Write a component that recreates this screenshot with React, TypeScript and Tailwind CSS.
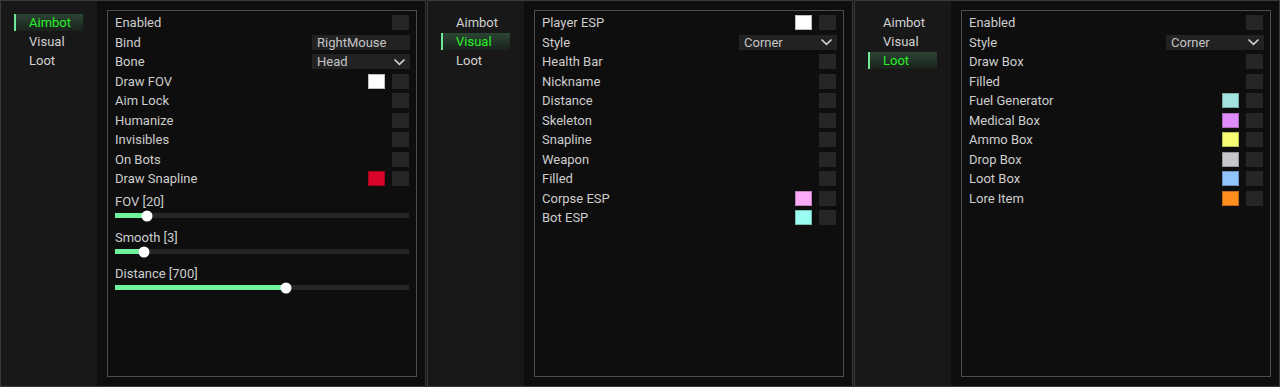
type Row = {
  label: string;
  kind?: "check" | "input" | "combo";
  value?: string;
  color?: string;
};

type Slider = { label: string; pct: number };

const tabs = ["Aimbot", "Visual", "Loot"];

const aimbotRows: Row[] = [
  { label: "Enabled" },
  { label: "Bind", kind: "input", value: "RightMouse" },
  { label: "Bone", kind: "combo", value: "Head" },
  { label: "Draw FOV", color: "#ffffff" },
  { label: "Aim Lock" },
  { label: "Humanize" },
  { label: "Invisibles" },
  { label: "On Bots" },
  { label: "Draw Snapline", color: "#d90429" },
];

const aimbotSliders: Slider[] = [
  { label: "FOV [20]", pct: 10.9 },
  { label: "Smooth [3]", pct: 9.8 },
  { label: "Distance [700]", pct: 58.3 },
];

const visualRows: Row[] = [
  { label: "Player ESP", color: "#ffffff" },
  { label: "Style", kind: "combo", value: "Corner" },
  { label: "Health Bar" },
  { label: "Nickname" },
  { label: "Distance" },
  { label: "Skeleton" },
  { label: "Snapline" },
  { label: "Weapon" },
  { label: "Filled" },
  { label: "Corpse ESP", color: "#fdaaf8" },
  { label: "Bot ESP", color: "#9bfdf1" },
];

const lootRows: Row[] = [
  { label: "Enabled" },
  { label: "Style", kind: "combo", value: "Corner" },
  { label: "Draw Box" },
  { label: "Filled" },
  { label: "Fuel Generator", color: "#a2e3df" },
  { label: "Medical Box", color: "#df8cfb" },
  { label: "Ammo Box", color: "#f6fd73" },
  { label: "Drop Box", color: "#c8c6cb" },
  { label: "Loot Box", color: "#92c3fd" },
  { label: "Lore Item", color: "#fd8d1d" },
];

function Chevron() {
  return (
    <svg width="13" height="8" viewBox="0 0 13 8" className="mr-[4px]">
      <path d="M1.5 1.5 L6.5 6.3 L11.5 1.5" fill="none" stroke="#d0d0d0" strokeWidth="1.7" />
    </svg>
  );
}

function Checkbox() {
  return <div className="w-[17px] h-[15px] bg-[#262626]" />;
}

function OptionRow({ row }: { row: Row }) {
  return (
    <div className="flex h-[19.5px] items-center justify-between">
      <span>{row.label}</span>
      {row.kind === "input" && (
        <div className="w-[98px] h-[15px] bg-[#222222] pl-[5px] leading-[15px] text-[#c4c4c4] mr-[-1px]">
          {row.value}
        </div>
      )}
      {row.kind === "combo" && (
        <div className="w-[98px] h-[15px] bg-[#222222] pl-[5px] leading-[15px] text-[#c4c4c4] flex items-center justify-between mr-[-1px]">
          <span>{row.value}</span>
          <Chevron />
        </div>
      )}
      {!row.kind || row.kind === "check" ? (
        <div className="flex items-center gap-[7px]">
          {row.color && (
            <div
              className="w-[17px] h-[15px] border border-black/25"
              style={{ backgroundColor: row.color }}
            />
          )}
          <Checkbox />
        </div>
      ) : null}
    </div>
  );
}

function SliderBlock({ s }: { s: Slider }) {
  return (
    <div className="mb-[8px]">
      <div className="h-[16px] leading-[16px]">{s.label}</div>
      <div className="h-[12px] flex items-center">
        <div className="relative w-full h-[5px] bg-[#262626]">
          <div className="absolute left-0 top-0 h-full bg-[#6ef29b]" style={{ width: `${s.pct}%` }} />
          <div
            className="absolute top-1/2 w-[11px] h-[11px] rounded-full bg-white -translate-x-1/2 -translate-y-1/2"
            style={{ left: `${s.pct}%` }}
          />
        </div>
      </div>
    </div>
  );
}

function Panel({ active, rows, sliders }: { active: number; rows: Row[]; sliders?: Slider[] }) {
  return (
    <div className="flex w-[426px] h-[387px] border border-[#3a3a3a] shrink-0">
      <div className="w-[96px] bg-[#181818] pt-[13px] pl-[13px]">
        {tabs.map((t, i) =>
          i === active ? (
            <div
              key={t}
              className="w-[69px] h-[17px] mb-[2px] border-l-2 border-[#6ee896] bg-gradient-to-b from-[#2b4534] to-[#1a221c] pl-[13px] leading-[18px] text-[#27f027]"
            >
              {t}
            </div>
          ) : (
            <div key={t} className="w-[69px] h-[17px] mb-[2px] pl-[15px] leading-[18px] text-[#d2d2d2]">
              {t}
            </div>
          )
        )}
      </div>
      <div className="flex-1 bg-[#0e0e0e] pt-[9px] pl-[10px] pr-[8px] pb-[9px]">
        <div className="h-full border border-[#4e4e4e] px-[7px] pt-[2px] text-[#cdcdcd]">
          {rows.map((r) => (
            <OptionRow key={r.label} row={r} />
          ))}
          {sliders && (
            <div className="mt-[5px]">
              {sliders.map((s) => (
                <SliderBlock key={s.label} s={s} />
              ))}
            </div>
          )}
        </div>
      </div>
    </div>
  );
}

export default function App() {
  return (
    <div
      className="flex gap-px w-[1280px] h-[387px] bg-[#161616] text-[13px] overflow-hidden"
      style={{ fontFamily: "Roboto, 'Noto Sans', sans-serif" }}
    >
      <Panel active={0} rows={aimbotRows} sliders={aimbotSliders} />
      <Panel active={1} rows={visualRows} />
      <Panel active={2} rows={lootRows} />
    </div>
  );
}
